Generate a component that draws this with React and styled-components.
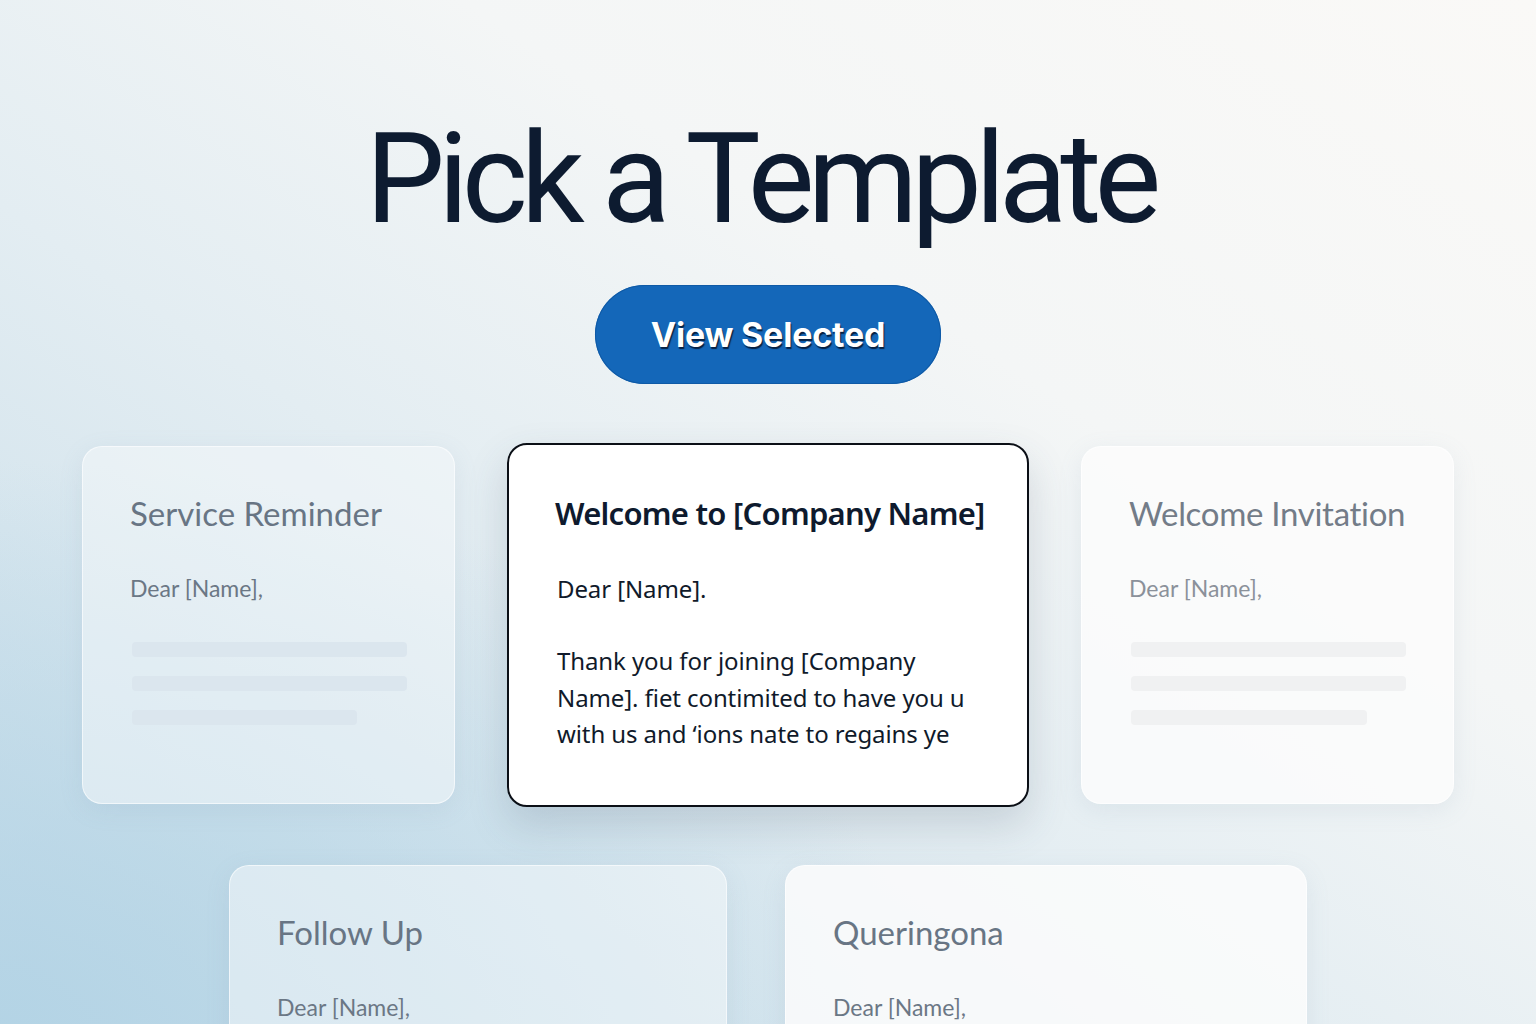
import styled, { createGlobalStyle } from "styled-components"

const Global = createGlobalStyle`
  html, body {
    margin: 0;
    height: 100%;
    overflow: hidden;
  }
  body {
    font-family: Lato, "Open Sans", sans-serif;
  }
`;

const Page = styled.div`
  height: 1024px;
  overflow: hidden;
  display: flex;
  flex-direction: column;
  align-items: center;
  background:
    radial-gradient(ellipse 60% 55% at 0% 100%, rgba(178, 211, 229, 0.9), rgba(178, 211, 229, 0) 100%),
    linear-gradient(to top right, #c4dbe8 0%, #e3edf2 40%, #f4f6f6 65%, #faf9f7 100%);

  & > * {
    flex-shrink: 0;
  }
`;

const Title = styled.h1`
  margin: 116px 16px 0 0;
  font-family: Roboto, "Liberation Sans", sans-serif;
  font-weight: 400;
  font-size: 126px;
  line-height: 1;
  letter-spacing: -0.055em;
  color: #0d1b30;
`;

const SelectButton = styled.button`
  margin-top: 43px;
  width: 346px;
  height: 99px;
  border: none;
  border-radius: 50px;
  background: #1467b9;
  box-shadow: inset 0 0 0 1px #0f5aa6;
  color: #fff;
  font-family: Inter, "Liberation Sans", sans-serif;
  font-weight: 700;
  font-size: 34px;
  letter-spacing: -0.2px;
  text-shadow: 1px 2px 1px rgba(5, 20, 45, 0.85);
  cursor: pointer;
`;

const Row = styled.div`
  display: flex;
  justify-content: center;
  align-items: center;
  gap: ${({ gap }) => gap}px;
  margin-top: ${({ top }) => top}px;
`;

const Card = styled.div`
  box-sizing: border-box;
  width: ${({ w }) => w}px;
  height: ${({ h }) => h}px;
  padding: 47px 48px 0 47px;
  border-radius: 20px;
  background: ${({ tone }) =>
    tone === "warm" ? "rgba(252, 252, 251, 0.85)" : "rgba(244, 248, 250, 0.55)"};
  border: 1px solid rgba(255, 255, 255, 0.6);
  box-shadow: 0 6px 24px rgba(120, 150, 170, 0.12);
  display: flex;
  flex-direction: column;
  flex-shrink: 0;
`;

const SelectedCard = styled(Card)`
  background: #ffffff;
  border: 2px solid #0b0f16;
  padding: 49px 46px 0;
  box-shadow: 0 18px 40px rgba(60, 80, 100, 0.18);
`;

const CardTitle = styled.div`
  font-family: Lato, "Open Sans", sans-serif;
  font-size: 33px;
  line-height: 1.2;
  letter-spacing: ${({ faint }) => (faint ? "-0.3px" : "0")};
  white-space: nowrap;
  color: ${({ faint }) => (faint ? "#737c88" : "#687584")};
`;

const StrongTitle = styled.div`
  font-family: "Noto Sans", "Open Sans", sans-serif;
  font-weight: 600;
  font-size: 31px;
  line-height: 1.25;
  letter-spacing: -0.75px;
  color: #0e1a2e;
  white-space: nowrap;
`;

const Greeting = styled.div`
  margin-top: ${({ gapTop }) => gapTop}px;
  font-family: Lato, "Open Sans", sans-serif;
  font-size: 23px;
  line-height: 1.3;
  color: ${({ faint }) => (faint ? "#8b919a" : "#6b7785")};
`;

const Letter = styled.div`
  margin-top: ${({ gapTop }) => gapTop}px;
  padding-left: 2px;
  font-family: "Noto Sans", "Open Sans", sans-serif;
  font-size: 24px;
  line-height: 36.5px;
  letter-spacing: -0.1px;
  color: #101a2a;
  white-space: nowrap;
`;

const Lines = styled.div`
  display: flex;
  flex-direction: column;
  gap: 19px;
  margin-top: 39px;
  padding-left: 2px;
`;

const Bar = styled.div`
  height: 15px;
  border-radius: 4px;
  width: ${({ w }) => w}px;
  background: ${({ faint }) => (faint ? "#f0f1f2" : "#dbe6ee")};
`;

function PlainCard({ title, faint, tone, w = 373, h = 358 }) {
  return (
    <Card w={w} h={h} tone={tone}>
      <CardTitle faint={faint}>{title}</CardTitle>
      <Greeting faint={faint} gapTop={40}>Dear [Name],</Greeting>
      <Lines>
        <Bar faint={faint} w={275} />
        <Bar faint={faint} w={275} />
        <Bar faint={faint} w={faint ? 236 : 225} />
      </Lines>
    </Card>
  )
}

export default function App() {
  return (
    <Page>
      <Global />
      <Title>Pick a Template</Title>
      <SelectButton>View Selected</SelectButton>

      <Row gap={52} top={59}>
        <PlainCard title="Service Reminder" />
        <SelectedCard w={522} h={364}>
          <StrongTitle>Welcome to [Company Name]</StrongTitle>
          <Letter gapTop={38}>Dear [Name].</Letter>
          <Letter gapTop={36}>
            Thank you for joining [Company<br />
            Name]. ﬁet contimited to have you u<br />
            with us and ‘ions nate to regains ye
          </Letter>
        </SelectedCard>
        <PlainCard title="Welcome Invitation" faint tone="warm" />
      </Row>

      <Row gap={58} top={58}>
        <Card w={498} h={360}>
          <CardTitle>Follow Up</CardTitle>
          <Greeting gapTop={40}>Dear [Name],</Greeting>
        </Card>
        <Card w={522} h={360} tone="warm">
          <CardTitle>Queringona</CardTitle>
          <Greeting gapTop={40}>Dear [Name],</Greeting>
        </Card>
      </Row>
    </Page>
  )
}
